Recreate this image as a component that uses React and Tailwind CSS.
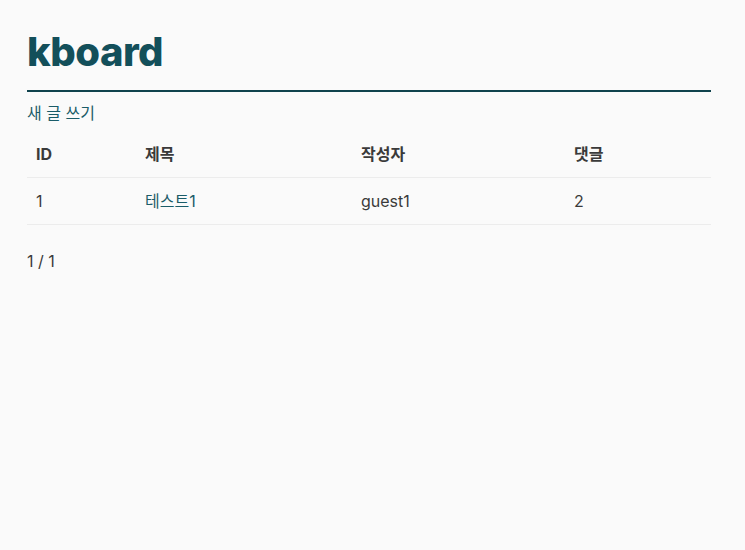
const posts = [{ id: 1, title: '테스트1', author: 'guest1', comments: 2 }];

export default function App() {
    return (
        <div
            className="min-h-[550px] bg-[#fafafa] text-[#3a3a3a] px-[27px] pt-[28px]"
            style={{ fontFamily: 'Inter, "Noto Sans CJK KR", sans-serif' }}
        >
            <div className="w-[684px]">
                <h1 className="text-[40px] leading-[48px] font-extrabold tracking-[-0.5px] text-[#134f5a] pb-[14px] border-b-2 border-[#10434d]">
                    kboard
                </h1>
                <a href="#" className="block mt-[9px] text-[16px] leading-6 text-[#1a5c68]">
                    새 글 쓰기
                </a>
                <table className="w-full mt-[6px] text-[16px] text-left border-collapse">
                    <thead>
                        <tr className="border-b border-[#ececec]">
                            <th className="w-[109px] px-[9px] py-[11px] font-bold leading-6">ID</th>
                            <th className="w-[216px] px-[9px] py-[11px] font-bold leading-6">제목</th>
                            <th className="w-[213px] px-[9px] py-[11px] font-bold leading-6">작성자</th>
                            <th className="px-[9px] py-[11px] font-bold leading-6">댓글</th>
                        </tr>
                    </thead>
                    <tbody>
                        {posts.map((p) => (
                            <tr key={p.id} className="border-b border-[#ececec]">
                                <td className="px-[9px] py-[11px] leading-6">{p.id}</td>
                                <td className="px-[9px] py-[11px] leading-6">
                                    <a href="#" className="text-[#1a5c68]">{p.title}</a>
                                </td>
                                <td className="px-[9px] py-[11px] leading-6">{p.author}</td>
                                <td className="px-[9px] py-[11px] leading-6">{p.comments}</td>
                            </tr>
                        ))}
                    </tbody>
                </table>
                <p className="mt-6 text-[16px] leading-6">1 / 1</p>
            </div>
        </div>
    );
}
